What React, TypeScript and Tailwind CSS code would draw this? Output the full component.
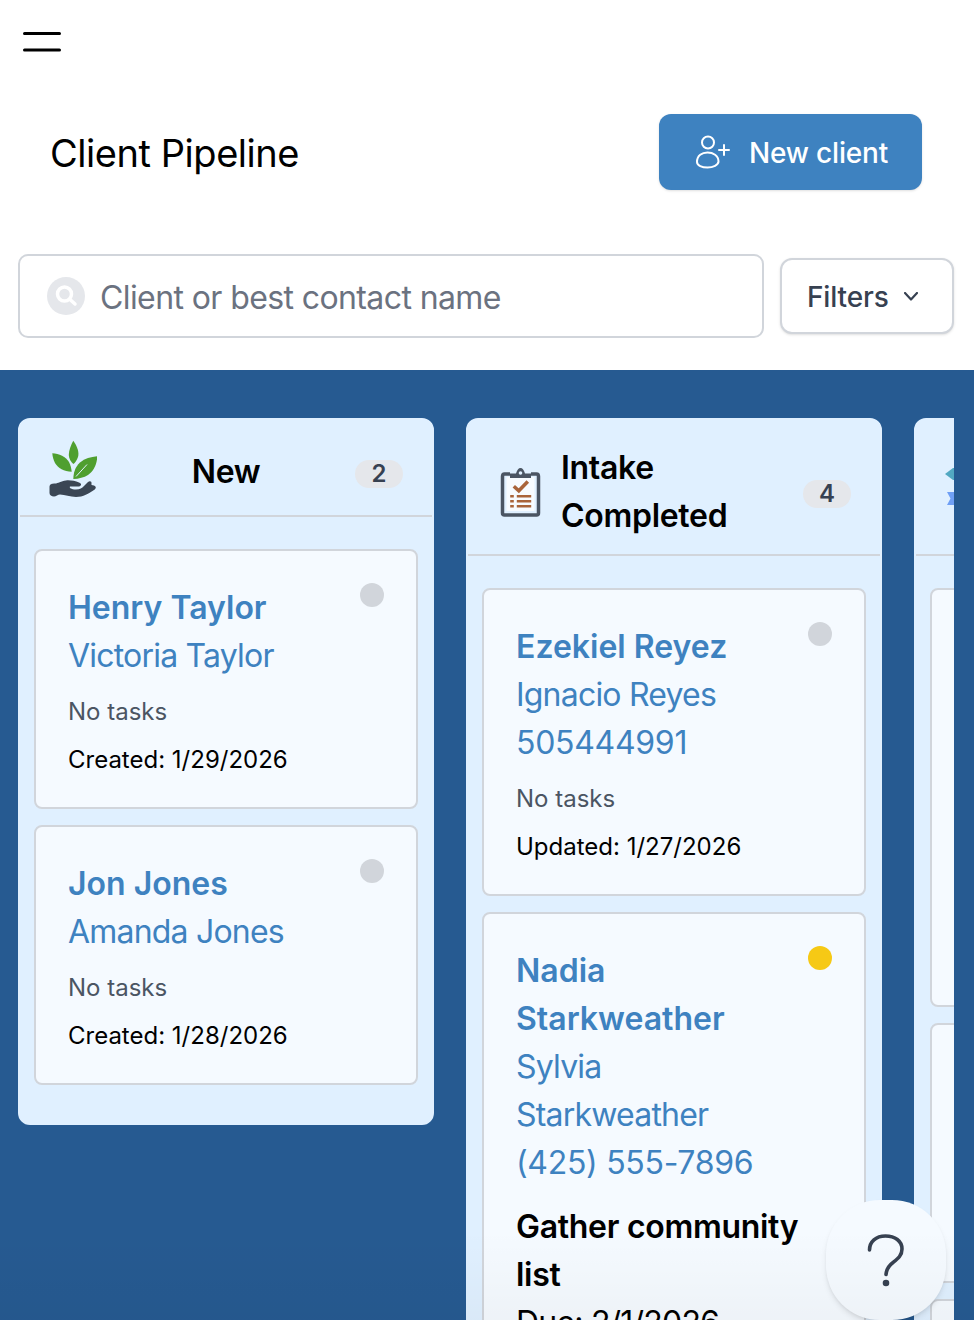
const font = { fontFamily: 'Inter, "Liberation Sans", sans-serif' };

function Card({ name, contact, phone, dot = "bg-[#d1d5db]", children }: { name: string; contact: string; phone?: string; dot?: string; children: React.ReactNode }) {
  return (
    <div className="rounded-[8px] border-2 border-[#d1d5db] bg-[#f5faff] pl-[32px] pr-[32px] pt-[32px] pb-[23px] text-[24px] leading-[48px]">
      <div className="flex gap-4">
        <div className="min-w-0 flex-1 pt-[1px] text-[32px] text-[#3e82c0]">
          <div className="font-semibold">{name}</div>
          <div className="tracking-[-0.8px]">{contact}</div>
          {phone && <div className="tracking-[-0.3px]">{phone}</div>}
        </div>
        <div className={`h-[24px] w-[24px] shrink-0 rounded-full ${dot}`} />
      </div>
      {children}
    </div>
  );
}

function Badge({ n, className }: { n: number; className: string }) {
  return (
    <div className={`h-[28px] w-[48px] shrink-0 rounded-full bg-[#e5e7eb] text-center text-[24px] font-semibold leading-[28px] text-[#374151] ${className}`}>
      {n}
    </div>
  );
}

function Sprout() {
  return (
    <svg width="48" height="58" viewBox="0 0 48 58" className="-mt-[2px] shrink-0">
      <path d="M24.3 .7C28 6 30.500 12 29 17C28 20 26 23 24.300 24C22 22 20 19 19.800 15C19.800 10 22 5 24.300 .7Z" fill="#4f9f2f" />
      <path d="M3.300 13.300C10 13.500 17 17 20 22C21.500 25 22.300 28 22.700 31.700C15 31.500 9 28 6 23C4.500 20 3.600 17 3.300 13.300Z" fill="#4f9f2f" />
      <path d="M48.300 16.300C48 24 45 31 39 35C35 37.500 30 38.800 24.300 39C24.500 33 26 27 31 22.500C36 18.500 42 16.800 48.300 16.300Z" fill="#4f9f2f" />
      <path d="M27 36.500L38 24.500" stroke="#e0f0ff" strokeWidth="1" fill="none" />
      <path d="M.5 47C.5 44 3 43.500 6 43.500C9 43.500 12 41 17 40.500C21 40 26 41 30 42.500C33 43.500 32.500 46 30 46.500L21 46.500C20 47.500 22 49.500 27 49.500C31 49.500 33 48 35 46L39 42C41 40.500 42.800 41.500 42.500 43.500L42.500 45L45 45.500C47.500 46.500 47.300 48.500 45 50C40 53.500 34 57 27 57C21 57 16 54.500 11 54.500C9 54.500 7 56.500 5 56.500C2.500 56.500 .5 55 .5 53Z" fill="#3b4654" />
    </svg>
  );
}

function ClipboardIcon() {
  return (
    <svg width="48" height="58" viewBox="0 0 48 58" className="shrink-0">
      <path d="M13 11H7.500C6 11 5.500 12 5.500 13.500V50C5.500 51.500 6 52 7.500 52H39.500C41 52 41.500 51.500 41.500 50V13.500C41.500 12 41 11 39.500 11H34" fill="#e0f0ff" stroke="#4b5563" strokeWidth="3.500" />
      <rect x="9.500" y="14" width="28" height="34" fill="#f7fbff" />
      <path d="M13 15V10.500H19C20 7 21.500 5 23.500 5C25.500 5 27 7 28 10.500H34V15Z" fill="#4b5563" />
      <circle cx="23.500" cy="10" r="1.800" fill="#e0f0ff" />
      <path d="M16.800 23.300L21.800 27.800L30.800 18.500" fill="none" stroke="#a9643a" strokeWidth="3.500" />
      <path d="M13.200 33.300H16.800M13.200 38.300H16.800M13.200 43.300H16.800M19.800 33.300H34.200M19.800 38.300H34.200M19.800 43.300H34.200" stroke="#a9643a" strokeWidth="2.600" />
    </svg>
  );
}

function ThirdIcon() {
  return (
    <svg width="48" height="58" viewBox="0 0 48 58" className="shrink-0 overflow-visible">
      <path d="M-1 16L7 10H24V22H7Z" fill="#52a8c2" />
      <path d="M1 34H24V47H1L4.500 40.500Z" fill="#6f9ff5" />
    </svg>
  );
}

export default function App() {
  return (
    <div className="relative h-[1320px] w-[974px] overflow-hidden bg-white text-black" style={font}>
      <svg width="38" height="20" viewBox="0 0 38 20" className="ml-[23px] mt-[32px] block">
        <path d="M1.500 1.500H36.500M1.500 18H36.500" stroke="#000" strokeWidth="3" strokeLinecap="round" />
      </svg>

      <div className="mt-[62px] flex items-center justify-between pl-[50px] pr-[52px]">
        <h1 className="pt-[2px] text-[38px] font-normal leading-[74px] tracking-[-0.45px]">Client Pipeline</h1>
        <button className="flex h-[76px] w-[263px] items-center justify-center gap-[18px] rounded-[12px] bg-[#3e82c0] pl-[2px] text-[28px] font-medium text-white shadow-sm">
          <svg width="36" height="36" viewBox="0 0 36 36" fill="none" stroke="#fff" strokeWidth="2" strokeLinecap="round">
            <circle cx="13" cy="8.500" r="6" />
            <path d="M2 28C2 21.500 7 18.500 12.500 18.500C18 18.500 23.500 21.500 23.500 27.500C23.500 31 18 33.500 12.500 33.500C7 33.500 2 31.500 2 28Z" />
            <path d="M29 11V21M24 16H34" />
          </svg>
          <span className="pt-[2px] tracking-[-0.2px]">New client</span>
        </button>
      </div>

      <div className="mt-[64px] flex items-center gap-4 pb-[32px] pl-[18px] pr-[20px]">
        <div className="flex h-[84px] flex-1 items-center gap-[15px] rounded-[10px] border-2 border-[#d1d5db] bg-white pl-[27px]">
          <svg width="38" height="38" viewBox="0 0 38 38" className="shrink-0">
            <circle cx="19" cy="19" r="19" fill="#e5e7eb" />
            <circle cx="17.500" cy="17" r="7" fill="none" stroke="#fff" strokeWidth="3.500" />
            <path d="M23 22.500L28 27" stroke="#fff" strokeWidth="3.500" strokeLinecap="round" />
          </svg>
          <span className="pt-[3px] text-[32px] tracking-[-0.6px] text-[#6b7280]">Client or best contact name</span>
        </div>
        <button className="flex h-[76px] w-[174px] items-center gap-[15px] rounded-[12px] border-2 border-[#d1d5db] bg-white pl-[25px] text-[28px] font-medium text-[#374151] shadow">
          <span className="pt-[2px] tracking-[-0.15px]">Filters</span>
          <svg width="14" height="9" viewBox="0 0 14 9" fill="none" stroke="#374151" strokeWidth="2.200" strokeLinecap="round" strokeLinejoin="round">
            <path d="M1 1L7 7.500L13 1" />
          </svg>
        </button>
      </div>

      <div className="h-[950px] bg-[#265a91] pl-[18px] pr-[20px] pt-[48px]">
        <div className="flex items-start gap-[32px] overflow-hidden">
          <section className="w-[416px] shrink-0 rounded-[12px] border-2 border-[#e0f0ff] bg-[#e0f0ff] pb-[38px]">
            <header className="flex items-center justify-between gap-4 border-b-2 border-[#d1d5db] pb-[17px] pl-[29px] pr-[29px] pt-[22px]">
              <Sprout />
              <h2 className="mt-[3px] text-[32px] font-semibold leading-[48px] tracking-[-0.3px]">New</h2>
              <Badge n={2} className="mt-[8px]" />
            </header>
            <div className="flex flex-col gap-[16px] px-[14px] pt-[32px]">
              <Card name="Henry Taylor" contact="Victoria Taylor">
                <div className="mt-2 text-[#4b5563]">No tasks</div>
                <div>Created: 1/29/2026</div>
              </Card>
              <Card name="Jon Jones" contact="Amanda Jones">
                <div className="mt-2 text-[#4b5563]">No tasks</div>
                <div>Created: 1/28/2026</div>
              </Card>
            </div>
          </section>

          <section className="w-[416px] shrink-0 rounded-[12px] border-2 border-[#e0f0ff] bg-[#e0f0ff] pb-[38px]">
            <header className="flex items-center justify-between gap-4 border-b-2 border-[#d1d5db] pb-[14px] pl-[29px] pr-[29px] pt-[24px]">
              <ClipboardIcon />
              <h2 className="flex-1 text-[32px] font-semibold leading-[48px] tracking-[-0.3px]">Intake Completed</h2>
              <Badge n={4} className="mt-1" />
            </header>
            <div className="flex flex-col gap-[16px] px-[14px] pt-[32px]">
              <Card name="Ezekiel Reyez" contact="Ignacio Reyes" phone="505444991">
                <div className="mt-2 text-[#4b5563]">No tasks</div>
                <div>Updated: 1/27/2026</div>
              </Card>
              <Card name="Nadia Starkweather" contact="Sylvia Starkweather" phone="(425) 555-7896" dot="bg-[#f6c915]">
                <div className="mt-4 text-[32px] font-semibold tracking-[-0.3px]">Gather community list</div>
                <div className="text-[32px] tracking-[-0.8px]">Due: 2/1/2026</div>
              </Card>
            </div>
          </section>

          <section className="w-[416px] shrink-0 rounded-[12px] border-2 border-[#e0f0ff] bg-[#e0f0ff] pb-[38px]">
            <header className="flex h-[136px] items-center border-b-2 border-[#d1d5db] pl-[30px]">
              <ThirdIcon />
            </header>
            <div className="flex flex-col gap-[16px] px-[14px] pt-[32px]">
              <div className="h-[419px] rounded-[8px] border-2 border-[#d1d5db] bg-[#f5faff]" />
              <div className="h-[260px] rounded-[8px] border-2 border-[#d1d5db] bg-[#f5faff]" />
              <div className="h-[260px] rounded-[8px] border-2 border-[#d1d5db] bg-[#f5faff]" />
            </div>
          </section>
        </div>
      </div>

      <button className="absolute left-[826px] top-[1200px] flex h-[120px] w-[120px] items-center justify-center rounded-[54px] bg-[#f5faff] shadow-md">
        <svg width="40" height="56" viewBox="0 0 40 56" fill="none" stroke="#374151" strokeWidth="3.600" strokeLinecap="round" strokeLinejoin="round">
          <path d="M3.500 18C3.500 9.500 10 4 19.500 4C29 4 36 9 36 17C36 23.500 32 26.500 27 30.500C23 33.500 20.500 36.500 20 42.500" />
          <circle cx="20" cy="51" r="1.500" fill="#374151" />
        </svg>
      </button>

      <div className="pointer-events-none absolute bottom-0 left-0 h-[90px] w-full bg-gradient-to-b from-transparent to-black/[0.03]" />
    </div>
  );
}
